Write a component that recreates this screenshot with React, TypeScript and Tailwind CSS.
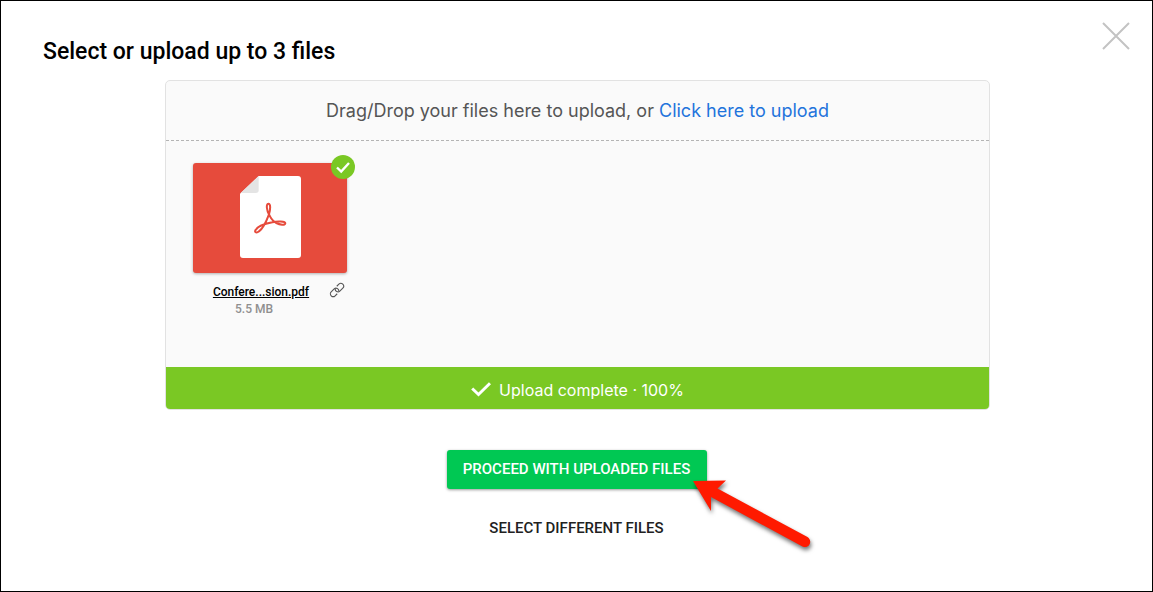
function CloseIcon() {
  return (
    <svg viewBox="0 0 28 28" className="size-7" fill="none" stroke="#c3c3c3" strokeWidth="2" aria-hidden="true">
      <path d="M1 1 27 27M27 1 1 27" />
    </svg>
  );
}

function PdfIcon() {
  return (
    <svg viewBox="45 33 183 246" className="h-[82px] w-[61px]" fill="none" aria-hidden="true">
      <path d="M101 33H219Q228 33 228 42V270Q228 279 219 279H54Q45 279 45 270V86Z" fill="#fff" />
      <path d="M101 33V76Q101 84 92 84H47Z" fill="#e4e4e4" />
      <g stroke="#e64b3c" strokeWidth="6" strokeLinejoin="round">
        <path d="M132 148C126 139 122 116 130 116C138 116 136 134 132 148C126 164 113 191 102 199C95 205 88 202 91 196C97 184 121 176 142 172C157 168 181 169 181 175C181 182 164 179 154 174C144 169 137 159 132 148Z" />
      </g>
    </svg>
  );
}

function DoneBadge() {
  return (
    <svg viewBox="0 0 24 24" className="absolute -top-2 -right-2 size-6" aria-hidden="true">
      <circle cx="12" cy="12" r="12" fill="#7ac824" />
      <path d="m6 12.5 4.2 4 7.8-8.5" fill="none" stroke="#fff" strokeWidth="2.4" />
    </svg>
  );
}

function LinkIcon() {
  return (
    <svg viewBox="0 0 16 16" className="size-4" fill="none" stroke="#555" strokeWidth="1.1" aria-hidden="true">
      <g transform="rotate(-45 8 8)">
        <path d="M5.5 10.8H2.6A2.8 2.8 0 0 1 2.600 5.2H6.800A2.800 2.800 0 0 1 8.500 10.100" />
        <path d="M10.5 5.2h2.900a2.800 2.800 0 0 1 0 5.6H9.200A2.800 2.800 0 0 1 7.500 5.900" />
      </g>
    </svg>
  );
}

function Arrow() {
  return (
    <svg
      viewBox="0 0 130 80"
      className="pointer-events-none absolute top-[27px] left-[242px] h-20 w-[130px] drop-shadow-[1px_3px_2px_rgba(0,0,0,0.55)]"
      aria-hidden="true"
    >
      <path d="M4 4 37 3.5 28.5 11.5 118.5 60C124 63.5 120.5 72.5 113.5 69.5L22 20V34Z" fill="#ff1a00" />
    </svg>
  );
}

export default function App() {
  return (
    <main className="min-h-screen border border-black bg-white pb-10 font-[Roboto,sans-serif] text-black">
      <header className="flex items-start justify-between pt-[21px] pr-[22px] pl-[42px]">
        <h1 className="mt-4 text-[23px] leading-7 font-medium">Select or upload up to 3 files</h1>
        <button type="button" aria-label="Close">
          <CloseIcon />
        </button>
      </header>

      <div className="mt-[14px] pr-4 pl-[18px]">
        <section className="mx-auto max-w-[825px] overflow-hidden rounded-[5px] border border-[#e2e2e2] bg-[#fafafa]">
          <p className="border-b border-dashed border-[#b4b4b4] py-4 text-center font-[Inter,sans-serif] text-[18px] leading-[27px] text-[#555]">
            Drag/Drop your files here to upload, or{" "}
            <a href="#upload" className="text-[#1f74dc]">
              Click here to upload
            </a>
          </p>

          <ul className="min-h-[226px] px-[27px] pt-[22px]">
            <li className="w-[154px]">
              <div className="relative flex h-[110px] items-center justify-center rounded-[3px] bg-[#e64b3c] pb-0.5 shadow-[0_1px_3px_rgba(0,0,0,0.3)]">
                <PdfIcon />
                <DoneBadge />
              </div>
              <div className="mt-2 flex items-start">
                <a href="#file" className="mt-[3px] flex-1 text-center text-[12px] leading-4 font-medium underline">
                  Confere...sion.pdf
                </a>
                <button type="button" aria-label="Copy link" className="mt-px mr-0.5">
                  <LinkIcon />
                </button>
              </div>
              <p className="pr-8 text-center text-[12px] leading-[18px] font-medium text-[#8f8f8f]">5.5 MB</p>
            </li>
          </ul>

          <div className="flex h-[42px] items-center justify-center gap-2 bg-[#7ac824] pt-1 font-[Inter,sans-serif] text-[16px] text-white">
            <svg viewBox="0 0 20 15" className="mb-0.5 h-[15px] w-5" fill="none" stroke="#fff" strokeWidth="3" aria-hidden="true">
              <path d="m1.2 6.5 6.3 6L19 1.2" />
            </svg>
            Upload complete · 100%
          </div>
        </section>
      </div>

      <div className="mt-10 flex flex-col items-center gap-5 text-[15px] font-medium">
        <div className="relative">
          <button
            type="button"
            className="h-[39px] w-[260px] rounded-[3px] bg-[#00c853] text-white shadow-[0_1px_3px_rgba(0,0,0,0.4)]"
          >
            PROCEED WITH UPLOADED FILES
          </button>
          <Arrow />
        </div>
        <button type="button" className="h-[39px] px-4 text-[#212121]">
          SELECT DIFFERENT FILES
        </button>
      </div>
    </main>
  );
}
